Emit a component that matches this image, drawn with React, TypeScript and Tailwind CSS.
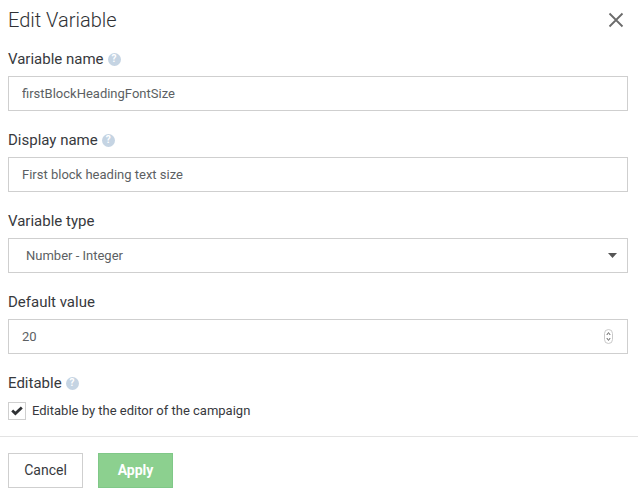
function Help() {
  return (
    <span className="ml-[4px] flex h-[13px] w-[13px] items-center justify-center rounded-full bg-[#c5d4e3] text-[10px] font-bold leading-none text-white">
      ?
    </span>
  );
}

function Label({ text, help = true }: { text: string; help?: boolean }) {
  return (
    <div className="flex h-[20px] items-center text-[15px] leading-[20px] text-[#37393d]">
      {text}
      {help && <Help />}
    </div>
  );
}

function Field({ label, value }: { label: string; value: string }) {
  return (
    <div className="mb-[19px]">
      <Label text={label} />
      <div className="mt-[7px] h-[35px]">
        <input
          readOnly
          value={value}
          className="h-full w-full border border-[#cfcfcf] bg-white pl-[13px] text-[13px] text-[#5c5f63] outline-none"
        />
      </div>
    </div>
  );
}

export default function App() {
  return (
    <div className="h-[499px] w-[638px] overflow-hidden bg-white font-['Roboto',sans-serif]">
      {/* Header */}
      <div className="flex h-[39px] items-center justify-between pl-[8px] pr-[14px]">
        <h1 className="text-[20px] font-light leading-none text-[#2f3134]">Edit Variable</h1>
        <svg width="16" height="16" viewBox="0 0 16 16" className="text-[#6b6b6b]">
          <path d="M1.5 1.5 14.5 14.5M14.5 1.5 1.5 14.5" stroke="currentColor" strokeWidth="1.8" fill="none" />
        </svg>
      </div>

      {/* Form */}
      <div className="pl-[8px] pr-[10px] pt-[10px]">
        <Field label="Variable name" value="firstBlockHeadingFontSize" />
        <Field label="Display name" value="First block heading text size" />
        <div className="mb-[19px]">
          <Label text="Variable type" help={false} />
          <div className="relative mt-[7px] h-[35px]">
            <select className="h-full w-full appearance-none border border-[#cfcfcf] bg-white pl-[17px] text-[13px] text-[#5c5f63] outline-none">
              <option>Number - Integer</option>
            </select>
            <svg width="9" height="5" viewBox="0 0 9 5" className="absolute right-[11px] top-[15px]">
              <path d="M0 0h9L4.5 5z" fill="#555" />
            </svg>
          </div>
        </div>
        <div className="mb-[19px]">
          <Label text="Default value" help={false} />
          <div className="relative mt-[7px] h-[35px]">
            <input
              readOnly
              value="20"
              className="h-full w-full border border-[#cfcfcf] bg-white pl-[13px] text-[13px] text-[#5c5f63] outline-none"
            />
            <svg width="9" height="15" viewBox="0 0 9 15" className="absolute right-[15px] top-[10px]">
              <rect x="0.5" y="0.5" width="8" height="14" rx="4" fill="#fff" stroke="#c9c9c9" />
              <path d="M2.8 6 4.5 3.6 6.2 6M2.8 9 4.5 11.4 6.2 9" stroke="#666" strokeWidth="1" fill="none" />
            </svg>
          </div>
        </div>
        <Label text="Editable" />
        <label className="mt-[9px] flex h-[18px] items-center">
          <span className="flex h-[18px] w-[18px] items-center justify-center border border-[#cfcfcf] bg-white">
            <svg width="12" height="10" viewBox="0 0 12 10">
              <path d="M1.2 4.6 4.4 7.6 10.8 1.6" stroke="#2f3134" strokeWidth="2.8" fill="none" />
            </svg>
          </span>
          <span className="ml-[6px] text-[13px] text-[#37393d]">Editable by the editor of the campaign</span>
        </label>
      </div>

      {/* Footer */}
      <div className="mt-[16px] flex gap-[15px] border-t border-[#e3e3e3] pl-[8px] pt-[16px]">
        <button className="h-[35px] w-[75px] border border-[#cfcfcf] bg-white text-[14px] text-[#37393d]">Cancel</button>
        <button className="h-[35px] w-[75px] border border-[#80c888] bg-[#8cd08f] text-[14px] font-bold text-white">Apply</button>
      </div>
    </div>
  );
}
